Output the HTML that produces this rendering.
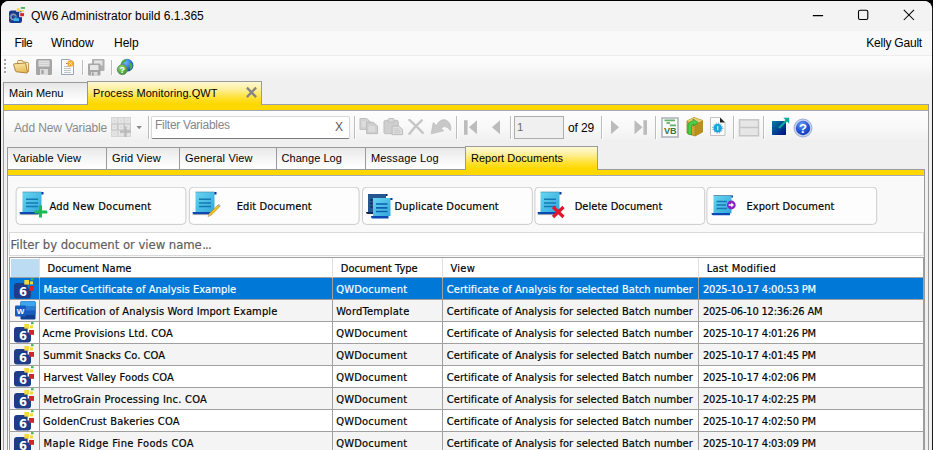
<!DOCTYPE html>
<html><head><meta charset="utf-8"><title>QW6 Administrator</title>
<style>
html,body{margin:0;padding:0;}
body{width:933px;height:450px;overflow:hidden;background:#000;position:relative;font-family:"Liberation Sans",sans-serif;font-size:12px;color:#000;}
.abs{position:absolute;}
#win{position:absolute;left:1px;top:1px;width:931px;height:460px;background:#f0f0f0;border-radius:8px 8px 0 0;overflow:hidden;}
#title{position:absolute;left:0;top:0;width:931px;height:30px;background:#f3f3f3;}
#menubar{position:absolute;left:0;top:30px;width:931px;height:24px;background:#f9f9f9;border-bottom:1px solid #eeeeee;}
.t12{font-size:12px;line-height:14px;white-space:nowrap;position:absolute;}
.t11{font-size:11px;line-height:13px;white-space:nowrap;position:absolute;}
.tah{-webkit-text-stroke:0.18px;font-family:"DejaVu Sans Condensed","DejaVu Sans","Liberation Sans",sans-serif;font-stretch:condensed;font-size:11px;line-height:13px;white-space:nowrap;position:absolute;}
.sep{position:absolute;width:1px;background:#bdbdbd;}
.tab{position:absolute;top:146px;height:23px;border:1px solid #9a9a9a;background:linear-gradient(#e8e8e8,#f4f4f4 45%,#fefefe 90%);box-sizing:border-box;}
.ts{letter-spacing:0.15px;}
.btn{position:absolute;top:186px;height:38px;width:171px;box-sizing:border-box;border:1px solid #d0d0d0;border-radius:4px;background:#fdfdfd;}
.row{position:absolute;left:9px;width:913px;height:21px;}
.cell{position:absolute;top:0;height:21px;}
.hl{position:absolute;left:9px;width:913px;height:1px;background:#a9a9a9;}
.vl{position:absolute;width:1px;background:#a9a9a9;}
</style></head><body>
<div id="win">
 <div id="title"></div>
 <div id="menubar"></div>
 <!-- title -->
 <svg class="abs" style="left:7px;top:5px" width="20" height="20" viewBox="0 0 20 20">
  <rect x="1" y="4.600" width="13" height="12.400" rx="2.200" fill="#17388f"/>
  <circle cx="5.300" cy="11" r="2.400" fill="none" stroke="#8f98a8" stroke-width="1.500"/>
  <circle cx="5.300" cy="11" r="3.500" fill="none" stroke="#8f98a8" stroke-width="0.900" stroke-dasharray="1.100 1.100" opacity="0.850"/>
  <rect x="6" y="12.200" width="5" height="2.900" fill="#39b3ea"/>
  <path d="M5 10.500Q7 9.200 8.500 11.500" stroke="#1c5fc0" stroke-width="1.200" fill="none"/>
  <rect x="8.600" y="2" width="3.400" height="3.500" fill="#f2dc38" stroke="#f3f3f3" stroke-width="0.500"/>
  <rect x="12.500" y="4" width="3.500" height="1.500" fill="#f2dc38"/>
  <rect x="11.700" y="6.700" width="4.800" height="4" fill="#d8252c" stroke="#f3f3f3" stroke-width="0.900"/>
  <rect x="12.800" y="1.100" width="4.200" height="1.700" fill="#35b44a"/>
 </svg>
 <div class="t12" style="left:30px;top:8px;">QW6 Administrator build 6.1.365</div>
 <svg class="abs" style="left:810px;top:8px" width="112" height="13" viewBox="0 0 112 13">
  <path d="M1.800 6.600H12.100" stroke="#000" stroke-width="1.050" fill="none"/>
  <rect x="47.500" y="1.200" width="9.300" height="9.300" rx="1.500" stroke="#000" stroke-width="1.100" fill="none"/>
  <path d="M92.800 0.800L103 11M103 0.800L92.800 11" stroke="#000" stroke-width="1.050" fill="none"/>
 </svg>
 <!-- menu -->
 <div class="t12" style="left:13.500px;top:35px;letter-spacing:-0.4px;">File</div>
 <div class="t12" style="left:50px;top:35px;">Window</div>
 <div class="t12" style="left:113px;top:35px;">Help</div>
 <div class="t12" style="right:10px;top:35px;letter-spacing:-0.2px;">Kelly Gault</div>
 <!-- toolbar1 -->
 <div class="abs" style="left:0;top:55px;width:931px;height:25px;background:linear-gradient(#fcfcfc 0,#fafafa 35%,#f3f3f3 75%,#f0f0f0 100%);"></div>
 
<svg class="abs" style="left:2px;top:57px" width="6" height="18" viewBox="0 0 6 18">
<g fill="#fff"><rect x="2" y="2" width="2" height="2"/><rect x="2" y="6" width="2" height="2"/><rect x="2" y="10" width="2" height="2"/><rect x="2" y="14" width="2" height="2"/></g>
<g fill="#a3a3a3"><rect x="1" y="1" width="2" height="2"/><rect x="1" y="5" width="2" height="2"/><rect x="1" y="9" width="2" height="2"/><rect x="1" y="13" width="2" height="2"/></g>
</svg>
<svg class="abs" style="left:12px;top:58px" width="17" height="16" viewBox="0 0 17 16">
<defs><linearGradient id="fo" x1="0" y1="0" x2="0.3" y2="1"><stop offset="0" stop-color="#fbe9ad"/><stop offset="1" stop-color="#e6bd5c"/></linearGradient></defs>
<path d="M4.500 2.500Q4.600 1.400 5.800 1.500L9 1.500Q10 1.600 10.500 3L14.800 3.500Q15.600 3.600 15.600 4.500L15.500 12.500L6 12Z" fill="#fcf3cb" stroke="#b48a3c" stroke-width="0.900" stroke-linejoin="round"/>
<path d="M0.600 5.600Q0.500 4.900 1.300 4.800L11.800 4Q12.600 4 12.800 4.800L14.500 13.200Q14.600 14.100 13.700 14L3.600 12.800Q2.800 12.700 2.500 12Z" fill="url(#fo)" stroke="#a87a30" stroke-width="0.900" stroke-linejoin="round"/>
</svg>
<svg class="abs" style="left:35px;top:58px" width="16" height="16" viewBox="0 0 16 16">
<rect x="0" y="0" width="16" height="16" rx="1.5" fill="#a6a6a6"/>
<rect x="2.5" y="1.5" width="11" height="6" fill="#e2e2e2"/>
<path d="M3 3.5H13M3 5.5H13" stroke="#cfcfcf" stroke-width="1"/>
<rect x="4" y="10" width="8" height="6" fill="#dcdcdc"/>
<rect x="5.5" y="11" width="2" height="4" fill="#9a9a9a"/>
</svg>
<svg class="abs" style="left:58px;top:57px" width="18" height="18" viewBox="0 0 18 18">
<path d="M2.5 1.5H10L14.5 4V16.5H2.5Z" fill="#fbfbfd" stroke="#9aa3b4" stroke-width="1"/>
<path d="M5 8.500H11M5 10.500H12M5 12.500H12M5 14.500H12" stroke="#bfc4cc" stroke-width="1"/><path d="M7 5.500H9" stroke="#777" stroke-width="1"/>
<circle cx="11.5" cy="5.5" r="3.8" fill="#fbc02d" opacity="0.4"/>
<circle cx="11.5" cy="5.5" r="2.9" fill="#f9a825"/>
<path d="M10.3 4.3L12.7 6.7M12.7 4.3L10.3 6.7" stroke="#fff" stroke-width="1"/>
</svg>
<div class="sep" style="left:81px;top:59px;height:15px;background:#bcbcbc"></div><div class="sep" style="left:82px;top:60px;height:15px;background:#fff"></div>
<svg class="abs" style="left:87px;top:58px" width="17" height="17" viewBox="0 0 17 17">
<rect x="4" y="0" width="12.5" height="12" rx="1" fill="#b0b0b0"/>
<rect x="6" y="1.5" width="8.5" height="5" fill="#e4e4e4"/>
<rect x="0" y="4.5" width="12.5" height="12" rx="1" fill="#a6a6a6"/>
<rect x="2" y="6" width="8.5" height="5" fill="#e6e6e6"/>
<rect x="3" y="13" width="6.5" height="3.5" fill="#dcdcdc"/>
<rect x="4" y="13.5" width="1.6" height="3" fill="#9a9a9a"/>
</svg>
<div class="sep" style="left:110px;top:59px;height:15px;background:#bcbcbc"></div><div class="sep" style="left:111px;top:60px;height:15px;background:#fff"></div>
<svg class="abs" style="left:115px;top:57px" width="18" height="18" viewBox="0 0 18 18">
<defs><radialGradient id="gl" cx="0.4" cy="0.3" r="0.8"><stop offset="0" stop-color="#6fb3f2"/><stop offset="0.6" stop-color="#2a6fd0"/><stop offset="1" stop-color="#143f8f"/></radialGradient>
<radialGradient id="gh" cx="0.4" cy="0.3" r="0.8"><stop offset="0" stop-color="#8fe06a"/><stop offset="1" stop-color="#2e8b22"/></radialGradient></defs>
<circle cx="11" cy="7.2" r="6.4" fill="url(#gl)"/>
<path d="M7 2.5Q9 1 11 1.5Q10 3.5 8 4.5Q7 6 5.5 5.5Q5.5 3.5 7 2.5Z" fill="#4caf3a"/>
<path d="M13 5Q15.5 4.5 16.5 7Q16.5 10 14.5 12Q13.5 10 14 8Q12.5 6.5 13 5Z" fill="#4caf3a"/>
<circle cx="6.3" cy="11.6" r="5" fill="url(#gh)" stroke="#6f7f6f" stroke-width="0.8"/>
<text x="6.3" y="15" text-anchor="middle" font-family="Liberation Sans, sans-serif" font-weight="bold" font-size="9" fill="#fff">?</text>
</svg>

 <!-- mdi panel -->
 <div class="abs" style="left:2px;top:103px;width:926px;height:360px;box-sizing:border-box;border:1px solid #9a9a9a;border-top-color:#9c9fb4;background:#f0f0f0;"></div>
 <div class="abs" style="left:3px;top:104px;width:924px;height:5px;background:#ffd800;"></div>
 <div class="abs" style="left:3px;top:109px;width:924px;height:1px;background:#a4a6b6;"></div>
 <!-- mdi tabs -->
 <div class="abs" style="left:2px;top:81px;width:85px;height:23px;box-sizing:border-box;border:1px solid #9a9a9a;border-right-color:#8e97ad;border-bottom-color:#9c9fb4;background:linear-gradient(#e6e6e6,#f4f4f4 45%,#ffffff 90%);"></div>
 <div class="t11" style="left:8px;top:86px;transform:scaleY(1.06);transform-origin:0 10px;">Main Menu</div>
 <div class="abs" style="left:86px;top:80px;width:175px;height:24px;box-sizing:border-box;border:1px solid #9a9a9a;border-left-color:#8e97ad;border-bottom:none;background:linear-gradient(#fdf8d4,#fdf0a0 30%,#ffe030 70%,#ffd800 95%);"></div>
 <div class="t11" style="left:92px;top:86px;letter-spacing:0.08px;transform:scaleY(1.06);transform-origin:0 10px;">Process Monitoring.QWT</div>
 <svg class="abs" style="left:244px;top:85px" width="13" height="13" viewBox="0 0 13 13"><path d="M1.900 1.600L11.100 11.100M11.100 1.600L1.900 11.100" stroke="#858585" stroke-width="2.300" fill="none"/></svg>
 <!-- toolbar2 -->
 <div class="abs" style="left:3px;top:110px;width:924px;height:29px;background:linear-gradient(#fdfdfd,#f9f9f9 50%,#f1f1f1);"></div>
 <div class="t12" style="left:13px;top:120px;color:#8a8a8a;letter-spacing:-0.13px;">Add New Variable</div>
 <div class="abs" style="left:150px;top:115px;width:199px;height:23px;background:#fff;border:1px solid #d8d8d8;border-bottom:1px solid #7c7c7c;border-radius:2px;box-sizing:border-box;"></div>
 <div class="t12" style="left:154px;top:117px;color:#85858f;letter-spacing:-0.27px;">Filter Variables</div>
 <div class="t12" style="left:334px;top:118.500px;color:#5a5a5a;">X</div>
 <div class="abs" style="left:513px;top:115px;width:50px;height:23px;background:#f0f0f0;border:1px solid #adadad;box-sizing:border-box;"></div>
 <div class="t12" style="left:516px;top:119px;color:#6d6d6d;font-size:11.500px;">1</div>
 <div class="t12" style="left:567px;top:120px;letter-spacing:-0.1px;">of 29</div>
 
<svg class="abs" style="left:110px;top:116px" width="20" height="20" viewBox="0 0 20 20">
<rect x="0" y="0" width="20" height="20" fill="#d6d6d6"/><rect x="0" y="6.500" width="20" height="7" fill="#c9c9c9"/>
<rect x="1.2" y="1.2" width="4.600" height="4.600" fill="#e7e7e7"/><rect x="2.6" y="2.6" width="1.800" height="1.800" fill="#d9d9d9"/><rect x="1.2" y="7.7" width="4.600" height="4.600" fill="#e7e7e7"/><rect x="2.6" y="9.1" width="1.800" height="1.800" fill="#d9d9d9"/><rect x="1.2" y="14.2" width="4.600" height="4.600" fill="#e7e7e7"/><rect x="2.6" y="15.6" width="1.800" height="1.800" fill="#d9d9d9"/><rect x="7.7" y="1.2" width="4.600" height="4.600" fill="#e7e7e7"/><rect x="9.1" y="2.6" width="1.800" height="1.800" fill="#d9d9d9"/><rect x="7.7" y="7.7" width="4.600" height="4.600" fill="#e7e7e7"/><rect x="9.1" y="9.1" width="1.800" height="1.800" fill="#d9d9d9"/><rect x="7.7" y="14.2" width="4.600" height="4.600" fill="#e7e7e7"/><rect x="9.1" y="15.6" width="1.800" height="1.800" fill="#d9d9d9"/><rect x="14.2" y="1.2" width="4.600" height="4.600" fill="#e7e7e7"/><rect x="15.6" y="2.6" width="1.800" height="1.800" fill="#d9d9d9"/><rect x="14.2" y="7.7" width="4.600" height="4.600" fill="#e7e7e7"/><rect x="15.6" y="9.1" width="1.800" height="1.800" fill="#d9d9d9"/><rect x="14.2" y="14.2" width="4.600" height="4.600" fill="#e7e7e7"/><rect x="15.6" y="15.6" width="1.800" height="1.800" fill="#d9d9d9"/>
<path d="M14.500 9.500V20M9 14.600H20" stroke="#bababa" stroke-width="2.200"/>
</svg>
<svg class="abs" style="left:135.400px;top:125px" width="7" height="4" viewBox="0 0 7 4"><path d="M0.500 0H5.900L3.200 3.200Z" fill="#8a8a8a"/></svg>
<div class="sep" style="left:147px;top:115px;height:23px;background:#bdbdbd"></div><div class="sep" style="left:148px;top:116px;height:23px;background:#fff"></div><div class="sep" style="left:353px;top:115px;height:23px;background:#bdbdbd"></div><div class="sep" style="left:354px;top:116px;height:23px;background:#fff"></div>
<svg class="abs" style="left:357.500px;top:117.300px" width="20" height="17.100" viewBox="0 0 21 18">
<path d="M1 0.5H8L12 4V12H1Z" fill="#d2d2d2" stroke="#bdbdbd" stroke-width="1"/>
<path d="M3 4.5H9M3 6.5H9M3 8.5H7" stroke="#e6e6e6" stroke-width="1"/>
<path d="M8 4.5H15L19.5 8.5V16.5H8Z" fill="#cfcfcf" stroke="#b9b9b9" stroke-width="1"/>
<path d="M10 9.5H17M10 11.5H17M10 13.5H17" stroke="#e8e8e8" stroke-width="1"/>
</svg>
<svg class="abs" style="left:381.500px;top:117px" width="21" height="18.100" viewBox="0 0 22 19">
<rect x="1" y="2.5" width="15" height="14" rx="1.5" fill="#cfcfcf" stroke="#bdbdbd"/>
<rect x="5.5" y="0.5" width="6" height="4" rx="1" fill="#d9d9d9" stroke="#bdbdbd"/>
<path d="M9.500 8.500H16.500L20.500 12V17.500H9.500Z" fill="#dedede" stroke="#b9b9b9"/>
<path d="M11.500 11.500H17M11.500 13.500H18.500M11.500 15.500H18.500" stroke="#c6c6c6" stroke-width="1"/>
</svg>
<svg class="abs" style="left:407.300px;top:118px" width="16.200" height="16.200" viewBox="0 0 17 17">
<path d="M1.500 1Q7 6 15.500 14.500M14.500 1.500Q8 7 1.500 15.500" stroke="#c6c6c6" stroke-width="2.6" fill="none" stroke-linecap="round"/>
</svg>
<svg class="abs" style="left:429px;top:117px" width="22" height="17" viewBox="0 0 22 17">
<path d="M1.200 15.800L3.200 4.500L6.500 7.500Q9 2 14 1.600Q19.500 2.500 20.800 8.500Q21 11 20.300 12.800Q18.500 8.800 14.500 8.600Q12.500 8.800 11.300 10.600L13.800 12.800Z" fill="#c8c8c8" stroke="#bdbdbd" stroke-width="0.700" stroke-linejoin="round"/>
</svg>
<div class="sep" style="left:455px;top:115px;height:23px;background:#bdbdbd"></div><div class="sep" style="left:456px;top:116px;height:23px;background:#fff"></div>
<svg class="abs" style="left:462px;top:118px" width="16" height="17" viewBox="0 0 16 17">
<rect x="1" y="1.200" width="3.600" height="14.600" fill="#bcbcbc"/><path d="M6 8.200L14 1.200V15.200Z" fill="#bcbcbc"/></svg>
<svg class="abs" style="left:490px;top:118px" width="10" height="17" viewBox="0 0 10 17"><path d="M1 8.200L9 1.200V15.200Z" fill="#bcbcbc"/></svg>
<div class="sep" style="left:509px;top:115px;height:23px;background:#bdbdbd"></div><div class="sep" style="left:510px;top:116px;height:23px;background:#fff"></div><div class="sep" style="left:600px;top:115px;height:23px;background:#bdbdbd"></div><div class="sep" style="left:601px;top:116px;height:23px;background:#fff"></div>
<svg class="abs" style="left:609px;top:118px" width="10" height="17" viewBox="0 0 10 17"><path d="M9 8.200L1 1.200V15.200Z" fill="#bcbcbc"/></svg>
<svg class="abs" style="left:631.500px;top:118px" width="16" height="17" viewBox="0 0 16 17">
<path d="M9.500 8.200L1.500 1.200V15.200Z" fill="#bcbcbc"/><rect x="10.400" y="1.200" width="3.600" height="14.600" fill="#bcbcbc"/></svg>
<div class="sep" style="left:654px;top:115px;height:23px;background:#bdbdbd"></div><div class="sep" style="left:655px;top:116px;height:23px;background:#fff"></div>
<svg class="abs" style="left:660px;top:116px" width="18" height="21" viewBox="0 0 18 21">
<rect x="1" y="1" width="16" height="19" fill="#fdfdfd" stroke="#aeb3bf" stroke-width="1.600"/>
<path d="M3.500 3.400H14" stroke="#62b062" stroke-width="1.700"/><path d="M5.500 6H9" stroke="#4c9a4c" stroke-width="1.300"/><path d="M8.800 8.400H15" stroke="#62b062" stroke-width="1.700"/>
<text x="9.300" y="17.300" text-anchor="middle" font-family="Liberation Sans, sans-serif" font-weight="bold" font-size="9.500" fill="#35763a" textLength="12.600" lengthAdjust="spacingAndGlyphs">VB</text>
</svg>
<svg class="abs" style="left:684px;top:115.200px" width="19" height="21" viewBox="0 0 19 21">
<path d="M2 5L9 1.500L17.500 4.500V16L10 20L2 17Z" fill="#cfa730" stroke="#9c7a14" stroke-width="0.800"/>
<path d="M10 8L17.500 4.500V16L10 20Z" fill="#b98f1e"/>
<path d="M2 5L9 1.500L17.500 4.500L10 8Z" fill="#e9cd6c"/>
<path d="M10 8V20" stroke="#a98418" stroke-width="0.600"/>
<path d="M3 18V10Q3 5.500 8 5V3L13 6.500L8.500 10V8Q6.500 8.500 6.500 11V19Z" fill="#46d046" stroke="#2b9b2b" stroke-width="0.700"/>
</svg>
<svg class="abs" style="left:708.200px;top:115.200px" width="18" height="21" viewBox="0 0 18 21">
<path d="M1.500 1.500H11L16 6.500V19.500H1.500Z" fill="#fdfdfd" stroke="#c2c2c2" stroke-width="1"/>
<path d="M11 1.500L16 6.500H11Z" fill="#222"/>
<circle cx="8.700" cy="12.100" r="4.300" fill="#1ba4de"/>
<circle cx="8.700" cy="12.100" r="5" fill="none" stroke="#2b6f92" stroke-width="0.900" stroke-dasharray="0.900 1.720"/>
<rect x="8.100" y="10" width="1.200" height="4.200" fill="#cfeefb"/>
</svg>
<div class="sep" style="left:732px;top:115px;height:23px;background:#bdbdbd"></div><div class="sep" style="left:733px;top:116px;height:23px;background:#fff"></div>
<svg class="abs" style="left:737px;top:117px" width="22" height="19" viewBox="0 0 22 19">
<rect x="1.500" y="1.800" width="19" height="16" fill="#e6e6e6" stroke="#c6c6c6" stroke-width="1.500"/>
<path d="M1.500 9.600H20.500" stroke="#c6c6c6" stroke-width="1.500"/>
</svg>
<div class="sep" style="left:762px;top:115px;height:23px;background:#bdbdbd"></div><div class="sep" style="left:763px;top:116px;height:23px;background:#fff"></div>
<svg class="abs" style="left:770px;top:115px" width="20" height="20" viewBox="0 0 20 20">
<defs><linearGradient id="sq" x1="0" y1="0" x2="1" y2="1"><stop offset="0" stop-color="#007fa3"/><stop offset="1" stop-color="#000a80"/></linearGradient></defs>
<rect x="1" y="5" width="14" height="14" rx="0.700" fill="url(#sq)"/>
<path d="M8 12L16 4" stroke="#10a99b" stroke-width="2.200"/>
<path d="M12.300 1.800H18.200V7.700Z" fill="#10a99b"/>
</svg>
<svg class="abs" style="left:792px;top:117px" width="20" height="20" viewBox="0 0 20 20">
<defs><radialGradient id="hb" cx="0.400" cy="0.250" r="0.900"><stop offset="0" stop-color="#6d9bf5"/><stop offset="0.500" stop-color="#2358d6"/><stop offset="1" stop-color="#0f2fa8"/></radialGradient></defs>
<circle cx="10" cy="10" r="9" fill="#c9d3ee" stroke="#8e9fd4" stroke-width="0.800"/>
<circle cx="10" cy="10" r="7.200" fill="url(#hb)"/>
<text x="10" y="14.600" text-anchor="middle" font-family="Liberation Sans, sans-serif" font-weight="bold" font-size="13" fill="#fff">?</text>
</svg>

 <!-- tab page -->
 <div class="abs" style="left:6px;top:168px;width:918px;height:300px;box-sizing:border-box;border:1px solid #9a9a9a;background:#f9f9f9;"></div>
 <div class="abs" style="left:7px;top:169px;width:916px;height:5px;background:#ffd800;"></div>
 <div class="abs" style="left:7px;top:174px;width:916px;height:1px;background:#a6a8b4;"></div><div class="abs" style="left:7px;top:175px;width:916px;height:1px;background:#ffffff;"></div>
 <!-- inner tabs -->
 <div class="tab" style="left:6px;width:100px;"></div><div class="t11 ts" style="left:12px;top:151px;">Variable View</div>
 <div class="tab" style="left:105px;width:74px;"></div><div class="t11 ts" style="left:111px;top:151px;">Grid View</div>
 <div class="tab" style="left:178px;width:98px;"></div><div class="t11 ts" style="left:184px;top:151px;">General View</div>
 <div class="tab" style="left:275px;width:90px;"></div><div class="t11" style="left:280.500px;top:151px;letter-spacing:0.05px;">Change Log</div>
 <div class="tab" style="left:364px;width:101px;"></div><div class="t11 ts" style="left:370px;top:151px;">Message Log</div>
 <div class="abs" style="left:464px;top:145px;width:133px;height:24px;box-sizing:border-box;border:1px solid #9a9a9a;border-bottom:none;background:linear-gradient(#fdf8d4,#fdf0a0 30%,#ffe030 70%,#ffd800 95%);"></div><div class="t11" style="left:470px;top:151px;letter-spacing:0.02px;">Report Documents</div>
 <!-- buttons -->
 <svg class="abs" style="left:0;top:186px" width="931" height="40" viewBox="0 0 931 40"><rect x="15.1" y="0.200" width="169.800" height="37.200" rx="4" fill="#fdfdfd" stroke="#cbcbcb" stroke-width="1"/><rect x="188.3" y="0.200" width="169.800" height="37.200" rx="4" fill="#fdfdfd" stroke="#cbcbcb" stroke-width="1"/><rect x="361.5" y="0.200" width="169.800" height="37.200" rx="4" fill="#fdfdfd" stroke="#cbcbcb" stroke-width="1"/><rect x="533.9" y="0.200" width="169.800" height="37.200" rx="4" fill="#fdfdfd" stroke="#cbcbcb" stroke-width="1"/><rect x="705.9" y="0.200" width="169.800" height="37.200" rx="4" fill="#fdfdfd" stroke="#cbcbcb" stroke-width="1"/></svg>
 <div class="tah" style="left:48.40px;top:199px;letter-spacing:0.233px;color:#000;">Add New Document</div><div class="tah" style="left:235.70px;top:199px;letter-spacing:0.117px;color:#000;">Edit Document</div><div class="tah" style="left:393.60px;top:199px;letter-spacing:0.148px;color:#000;">Duplicate Document</div><div class="tah" style="left:573.70px;top:199px;letter-spacing:0.046px;color:#000;">Delete Document</div><div class="tah" style="left:745.50px;top:199px;letter-spacing:0.077px;color:#000;">Export Document</div>
 <svg class="abs" style="left:17.3px;top:188px" width="34" height="32" viewBox="0 0 34 32">
<defs><linearGradient id="sca" x1="0" y1="0" x2="1" y2="1"><stop offset="0" stop-color="#66d6f1"/><stop offset="1" stop-color="#31a6dc"/></linearGradient></defs>

<path d="M23 3H25.500V5.500H23Z" fill="#0d3aa0"/>
<path d="M4.500 3H23.500V23H4.500Z" fill="url(#sca)"/>
<path d="M4.500 3H23.500" stroke="#4a7f9e" stroke-width="0.600"/>
<path d="M8 10.300H20M8 14H20M8 17.600H20" stroke="#157ab2" stroke-width="1.500"/>
<path d="M1.500 23H21V25.300H3Q1.500 25.300 1.500 23Z" fill="#0c47b4"/>
<path d="M1.500 25.600H20" stroke="#6b6b6b" stroke-width="0.500"/>
<path d="M20 23.300H30" stroke="#7d7d7d" stroke-width="0.700"/><path d="M22.500 16.500V28.500M16.500 23H29" stroke="#1db954" stroke-width="3"/>
</svg><svg class="abs" style="left:190.3px;top:188px" width="34" height="32" viewBox="0 0 34 32">
<defs><linearGradient id="scb" x1="0" y1="0" x2="1" y2="1"><stop offset="0" stop-color="#66d6f1"/><stop offset="1" stop-color="#31a6dc"/></linearGradient></defs>

<path d="M23 3H25.500V5.500H23Z" fill="#0d3aa0"/>
<path d="M4.500 3H23.500V23H4.500Z" fill="url(#scb)"/>
<path d="M4.500 3H23.500" stroke="#4a7f9e" stroke-width="0.600"/>
<path d="M8 10.300H20M8 14H20M8 17.600H20" stroke="#157ab2" stroke-width="1.500"/>
<path d="M1.500 23H21V25.300H3Q1.500 25.300 1.500 23Z" fill="#0c47b4"/>
<path d="M1.500 25.600H20" stroke="#6b6b6b" stroke-width="0.500"/>
<path d="M17 27.500L18.300 24.500L26.800 16.200L28.500 17.900L20 26.300Z" fill="#f4c21b" stroke="#9c7a12" stroke-width="0.500"/><path d="M26.800 16.200L27.800 15.200L29.500 16.900L28.500 17.900Z" fill="#bdbdbd" stroke="#888" stroke-width="0.400"/><path d="M17 27.500L18.300 24.500L20 26.300Z" fill="#d9b9a0"/>
</svg><svg class="abs" style="left:535.3px;top:188px" width="34" height="32" viewBox="0 0 34 32">
<defs><linearGradient id="scd" x1="0" y1="0" x2="1" y2="1"><stop offset="0" stop-color="#66d6f1"/><stop offset="1" stop-color="#31a6dc"/></linearGradient></defs>

<path d="M23 3H25.500V5.500H23Z" fill="#0d3aa0"/>
<path d="M4.500 3H23.500V23H4.500Z" fill="url(#scd)"/>
<path d="M4.500 3H23.500" stroke="#4a7f9e" stroke-width="0.600"/>
<path d="M8 10.300H20M8 14H20M8 17.600H20" stroke="#157ab2" stroke-width="1.500"/>
<path d="M1.500 23H21V25.300H3Q1.500 25.300 1.500 23Z" fill="#0c47b4"/>
<path d="M1.500 25.600H20" stroke="#6b6b6b" stroke-width="0.500"/>
<path d="M17 18L27.500 28M27.500 18L17 28" stroke="#e0182d" stroke-width="3.200"/>
</svg><svg class="abs" style="left:364.200px;top:190.200px" width="30" height="30" viewBox="0 0 30 30">
<defs><linearGradient id="scc" x1="0" y1="0" x2="1" y2="1"><stop offset="0" stop-color="#66d6f1"/><stop offset="1" stop-color="#31a6dc"/></linearGradient></defs>
<path d="M20.500 3H22.500V5H20.500Z" fill="#10244f"/>
<path d="M3 3H21V21H3Z" fill="#24578f"/>
<path d="M1 21H9V23H2.500Q1 23 1 21Z" fill="#14285a"/>
<path d="M5.500 9H7.500M5.500 12.500H7.500M5.500 16H7.500" stroke="#10244f" stroke-width="1.300"/>
<path d="M25 7H27.500V9H25Z" fill="#0d3aa0"/>
<path d="M8 7H25.500V25H8Z" fill="url(#scc)"/>
<path d="M11 13H22.500M11 16.800H22.500M11 20.500H22.500" stroke="#0d5fae" stroke-width="1.700"/>
<path d="M6 25H23.500V27.500H7.500Q6 27.500 6 25Z" fill="#0c47b4"/>
</svg><svg class="abs" style="left:709px;top:192.200px" width="28" height="26" viewBox="0 0 28 26">
<defs><linearGradient id="sce" x1="0" y1="0" x2="1" y2="1"><stop offset="0" stop-color="#66d6f1"/><stop offset="1" stop-color="#31a6dc"/></linearGradient></defs>
<path d="M20.500 2.500H23V4.500H20.500Z" fill="#0d3aa0"/>
<path d="M3.500 2.500H21.500V20.300H3.500Z" fill="url(#sce)"/>
<path d="M3.500 2.500H21.500" stroke="#4a6f8e" stroke-width="0.700"/>
<path d="M6.500 8.500H17M6.500 12H16M6.500 15.500H17" stroke="#157ab2" stroke-width="1.500"/>
<path d="M1.500 20H20V22.300H3Q1.500 22.300 1.500 20Z" fill="#0c47b4"/>
<circle cx="21.300" cy="12" r="4.400" fill="#8a1fc4"/>
<path d="M18.700 12H22" stroke="#fff" stroke-width="1.500"/><path d="M21.300 9.600L24 12L21.300 14.400Z" fill="#fff"/>
</svg>
 <!-- filter box -->
 <div class="abs" style="left:8px;top:231px;width:915px;height:24px;background:#fff;border:1px solid #d9d9d9;box-sizing:border-box;"></div>
 <div class="tah" style="left:9.60px;top:236px;letter-spacing:-0.055px;color:#5e5e5e;font-size:13px;line-height:15px;">Filter by document or view name</div><div class="tah" style="left:201.20px;top:236px;letter-spacing:-0.813px;color:#5e5e5e;font-size:13px;line-height:15px;">...</div>
 <!-- grid -->
 <div class="abs" style="left:8px;top:256px;width:915px;height:200px;background:#fff;"></div>
<div class="abs" style="left:8px;top:256px;width:915px;height:1px;background:#a0a0a0;"></div>
<div class="abs" style="left:8px;top:256px;width:1px;height:200px;background:#a0a0a0;"></div>
<div class="abs" style="left:922px;top:256px;width:1px;height:200px;background:#a0a0a0;"></div>
<div class="abs" style="left:10px;top:258px;width:28px;height:18px;background:#bcdcf4;"></div>
<div class="abs" style="left:9px;top:276px;width:913px;height:1px;background:#a0a0a0;"></div>
<div class="abs" style="left:38px;top:257px;width:1px;height:20px;background:#e0e0e0;"></div>
<div class="abs" style="left:331px;top:257px;width:1px;height:20px;background:#e0e0e0;"></div>
<div class="abs" style="left:441px;top:257px;width:1px;height:20px;background:#e0e0e0;"></div>
<div class="abs" style="left:697px;top:257px;width:1px;height:20px;background:#e0e0e0;"></div>
<div class="tah" style="left:46.50px;top:261px;letter-spacing:0.023px;color:#000;">Document Name</div>
<div class="tah" style="left:339.80px;top:261px;letter-spacing:-0.015px;color:#000;">Document Type</div>
<div class="tah" style="left:449.40px;top:261px;letter-spacing:0.344px;color:#000;">View</div>
<div class="tah" style="left:705.80px;top:261px;letter-spacing:0.241px;color:#000;">Last Modified</div>
<div class="abs" style="left:9px;top:277px;width:913px;height:21px;background:#0078d7;"></div>
<div class="abs" style="left:9px;top:298px;width:913px;height:1px;background:#a0a0a0;"></div>
<svg class="abs" style="left:12px;top:277px" width="22" height="21" viewBox="0 0 22 21">
<path d="M4 5H14.600V10.500H18V17.500Q18 20.500 15 20.500H4Q1 20.500 1 17.500V8Q1 5 4 5Z" fill="#1f3c88"/>
<rect x="11.3" y="2" width="4.7" height="4.6" fill="#f3d93a"/>
<rect x="17" y="3.4" width="3" height="3" fill="#f3d93a"/>
<rect x="16" y="8" width="5" height="4.8" fill="#d3232b"/>
<rect x="18" y="0.2" width="2.6" height="2" fill="#3cb54a"/>
<text x="10.100" y="17.900" text-anchor="middle" font-family="DejaVu Sans, Liberation Sans, sans-serif" font-weight="bold" font-size="11.500" fill="#fff">6</text>
</svg>
<div class="tah" style="left:42.60px;top:282px;letter-spacing:0.040px;color:#fff;">Master Certificate of Analysis Example</div>
<div class="tah" style="left:335.20px;top:282px;letter-spacing:0.226px;color:#fff;">QWDocument</div>
<div class="tah" style="left:445.80px;top:282px;letter-spacing:0.063px;color:#fff;">Certificate of Analysis for selected Batch number</div>
<div class="tah" style="left:701.90px;top:282px;letter-spacing:-0.160px;color:#fff;">2025-10-17 4:00:53 PM</div>
<div class="abs" style="left:9px;top:299px;width:913px;height:21px;background:#f4f4f4;"></div>
<div class="abs" style="left:9px;top:320px;width:913px;height:1px;background:#a0a0a0;"></div>
<svg class="abs" style="left:12.6px;top:300.3px" width="22" height="20" viewBox="0 0 22 20">
<rect x="6.5" y="0.5" width="15" height="18" rx="1.2" fill="#103f91"/>
<rect x="6.5" y="0.5" width="15" height="13.5" rx="1.2" fill="#185abd"/>
<rect x="6.5" y="0.5" width="15" height="9" rx="1.2" fill="#2b7cd3"/>
<rect x="6.5" y="0.5" width="15" height="4.5" rx="1.2" fill="#41a5ee"/>
<rect x="1" y="4.5" width="11" height="11" rx="1" fill="#185abd"/>
<text x="6.5" y="13.2" text-anchor="middle" font-family="Liberation Sans, sans-serif" font-weight="bold" font-size="8" fill="#fff">W</text>
</svg>
<div class="tah" style="left:42.90px;top:304px;letter-spacing:0.133px;color:#000;">Certification of Analysis Word Import Example</div>
<div class="tah" style="left:335.20px;top:304px;letter-spacing:0.252px;color:#000;">WordTemplate</div>
<div class="tah" style="left:445.80px;top:304px;letter-spacing:0.063px;color:#000;">Certificate of Analysis for selected Batch number</div>
<div class="tah" style="left:701.90px;top:304px;letter-spacing:-0.185px;color:#000;">2025-06-10 12:36:26 AM</div>
<div class="abs" style="left:9px;top:321px;width:913px;height:21px;background:#ffffff;"></div>
<div class="abs" style="left:9px;top:342px;width:913px;height:1px;background:#a0a0a0;"></div>
<svg class="abs" style="left:12px;top:321px" width="22" height="21" viewBox="0 0 22 21">
<path d="M4 5H14.600V10.500H18V17.500Q18 20.500 15 20.500H4Q1 20.500 1 17.500V8Q1 5 4 5Z" fill="#1f3c88"/>
<rect x="11.3" y="2" width="4.7" height="4.6" fill="#f3d93a"/>
<rect x="17" y="3.4" width="3" height="3" fill="#f3d93a"/>
<rect x="16" y="8" width="5" height="4.8" fill="#d3232b"/>
<rect x="18" y="0.2" width="2.6" height="2" fill="#3cb54a"/>
<text x="10.100" y="17.900" text-anchor="middle" font-family="DejaVu Sans, Liberation Sans, sans-serif" font-weight="bold" font-size="11.500" fill="#fff">6</text>
</svg>
<div class="tah" style="left:41.60px;top:326px;letter-spacing:0.142px;color:#000;">Acme Provisions Ltd. COA</div>
<div class="tah" style="left:335.20px;top:326px;letter-spacing:0.226px;color:#000;">QWDocument</div>
<div class="tah" style="left:445.80px;top:326px;letter-spacing:0.063px;color:#000;">Certificate of Analysis for selected Batch number</div>
<div class="tah" style="left:701.90px;top:326px;letter-spacing:-0.160px;color:#000;">2025-10-17 4:01:26 PM</div>
<div class="abs" style="left:9px;top:343px;width:913px;height:21px;background:#f4f4f4;"></div>
<div class="abs" style="left:9px;top:364px;width:913px;height:1px;background:#a0a0a0;"></div>
<svg class="abs" style="left:12px;top:343px" width="22" height="21" viewBox="0 0 22 21">
<path d="M4 5H14.600V10.500H18V17.500Q18 20.500 15 20.500H4Q1 20.500 1 17.500V8Q1 5 4 5Z" fill="#1f3c88"/>
<rect x="11.3" y="2" width="4.7" height="4.6" fill="#f3d93a"/>
<rect x="17" y="3.4" width="3" height="3" fill="#f3d93a"/>
<rect x="16" y="8" width="5" height="4.8" fill="#d3232b"/>
<rect x="18" y="0.2" width="2.6" height="2" fill="#3cb54a"/>
<text x="10.100" y="17.900" text-anchor="middle" font-family="DejaVu Sans, Liberation Sans, sans-serif" font-weight="bold" font-size="11.500" fill="#fff">6</text>
</svg>
<div class="tah" style="left:42.30px;top:348px;letter-spacing:0.087px;color:#000;">Summit Snacks Co. COA</div>
<div class="tah" style="left:335.20px;top:348px;letter-spacing:0.226px;color:#000;">QWDocument</div>
<div class="tah" style="left:445.80px;top:348px;letter-spacing:0.063px;color:#000;">Certificate of Analysis for selected Batch number</div>
<div class="tah" style="left:701.90px;top:348px;letter-spacing:-0.160px;color:#000;">2025-10-17 4:01:45 PM</div>
<div class="abs" style="left:9px;top:365px;width:913px;height:21px;background:#ffffff;"></div>
<div class="abs" style="left:9px;top:386px;width:913px;height:1px;background:#a0a0a0;"></div>
<svg class="abs" style="left:12px;top:365px" width="22" height="21" viewBox="0 0 22 21">
<path d="M4 5H14.600V10.500H18V17.500Q18 20.500 15 20.500H4Q1 20.500 1 17.500V8Q1 5 4 5Z" fill="#1f3c88"/>
<rect x="11.3" y="2" width="4.7" height="4.6" fill="#f3d93a"/>
<rect x="17" y="3.4" width="3" height="3" fill="#f3d93a"/>
<rect x="16" y="8" width="5" height="4.8" fill="#d3232b"/>
<rect x="18" y="0.2" width="2.6" height="2" fill="#3cb54a"/>
<text x="10.100" y="17.900" text-anchor="middle" font-family="DejaVu Sans, Liberation Sans, sans-serif" font-weight="bold" font-size="11.500" fill="#fff">6</text>
</svg>
<div class="tah" style="left:42.60px;top:370px;letter-spacing:0.115px;color:#000;">Harvest Valley Foods COA</div>
<div class="tah" style="left:335.20px;top:370px;letter-spacing:0.226px;color:#000;">QWDocument</div>
<div class="tah" style="left:445.80px;top:370px;letter-spacing:0.063px;color:#000;">Certificate of Analysis for selected Batch number</div>
<div class="tah" style="left:701.90px;top:370px;letter-spacing:-0.160px;color:#000;">2025-10-17 4:02:06 PM</div>
<div class="abs" style="left:9px;top:387px;width:913px;height:21px;background:#f4f4f4;"></div>
<div class="abs" style="left:9px;top:408px;width:913px;height:1px;background:#a0a0a0;"></div>
<svg class="abs" style="left:12px;top:387px" width="22" height="21" viewBox="0 0 22 21">
<path d="M4 5H14.600V10.500H18V17.500Q18 20.500 15 20.500H4Q1 20.500 1 17.500V8Q1 5 4 5Z" fill="#1f3c88"/>
<rect x="11.3" y="2" width="4.7" height="4.6" fill="#f3d93a"/>
<rect x="17" y="3.4" width="3" height="3" fill="#f3d93a"/>
<rect x="16" y="8" width="5" height="4.8" fill="#d3232b"/>
<rect x="18" y="0.2" width="2.6" height="2" fill="#3cb54a"/>
<text x="10.100" y="17.900" text-anchor="middle" font-family="DejaVu Sans, Liberation Sans, sans-serif" font-weight="bold" font-size="11.500" fill="#fff">6</text>
</svg>
<div class="tah" style="left:42.60px;top:392px;letter-spacing:0.230px;color:#000;">MetroGrain Processing Inc. COA</div>
<div class="tah" style="left:335.20px;top:392px;letter-spacing:0.226px;color:#000;">QWDocument</div>
<div class="tah" style="left:445.80px;top:392px;letter-spacing:0.063px;color:#000;">Certificate of Analysis for selected Batch number</div>
<div class="tah" style="left:701.90px;top:392px;letter-spacing:-0.160px;color:#000;">2025-10-17 4:02:25 PM</div>
<div class="abs" style="left:9px;top:409px;width:913px;height:21px;background:#ffffff;"></div>
<div class="abs" style="left:9px;top:430px;width:913px;height:1px;background:#a0a0a0;"></div>
<svg class="abs" style="left:12px;top:409px" width="22" height="21" viewBox="0 0 22 21">
<path d="M4 5H14.600V10.500H18V17.500Q18 20.500 15 20.500H4Q1 20.500 1 17.500V8Q1 5 4 5Z" fill="#1f3c88"/>
<rect x="11.3" y="2" width="4.7" height="4.6" fill="#f3d93a"/>
<rect x="17" y="3.4" width="3" height="3" fill="#f3d93a"/>
<rect x="16" y="8" width="5" height="4.8" fill="#d3232b"/>
<rect x="18" y="0.2" width="2.6" height="2" fill="#3cb54a"/>
<text x="10.100" y="17.900" text-anchor="middle" font-family="DejaVu Sans, Liberation Sans, sans-serif" font-weight="bold" font-size="11.500" fill="#fff">6</text>
</svg>
<div class="tah" style="left:42.10px;top:414px;letter-spacing:0.220px;color:#000;">GoldenCrust Bakeries COA</div>
<div class="tah" style="left:335.20px;top:414px;letter-spacing:0.226px;color:#000;">QWDocument</div>
<div class="tah" style="left:445.80px;top:414px;letter-spacing:0.063px;color:#000;">Certificate of Analysis for selected Batch number</div>
<div class="tah" style="left:701.90px;top:414px;letter-spacing:-0.160px;color:#000;">2025-10-17 4:02:50 PM</div>
<div class="abs" style="left:9px;top:431px;width:913px;height:21px;background:#f4f4f4;"></div>
<div class="abs" style="left:9px;top:452px;width:913px;height:1px;background:#a0a0a0;"></div>
<svg class="abs" style="left:12px;top:431px" width="22" height="21" viewBox="0 0 22 21">
<path d="M4 5H14.600V10.500H18V17.500Q18 20.500 15 20.500H4Q1 20.500 1 17.500V8Q1 5 4 5Z" fill="#1f3c88"/>
<rect x="11.3" y="2" width="4.7" height="4.6" fill="#f3d93a"/>
<rect x="17" y="3.4" width="3" height="3" fill="#f3d93a"/>
<rect x="16" y="8" width="5" height="4.8" fill="#d3232b"/>
<rect x="18" y="0.2" width="2.6" height="2" fill="#3cb54a"/>
<text x="10.100" y="17.900" text-anchor="middle" font-family="DejaVu Sans, Liberation Sans, sans-serif" font-weight="bold" font-size="11.500" fill="#fff">6</text>
</svg>
<div class="tah" style="left:42.60px;top:436px;letter-spacing:0.370px;color:#000;">Maple Ridge Fine Foods COA</div>
<div class="tah" style="left:335.20px;top:436px;letter-spacing:0.226px;color:#000;">QWDocument</div>
<div class="tah" style="left:445.80px;top:436px;letter-spacing:0.063px;color:#000;">Certificate of Analysis for selected Batch number</div>
<div class="tah" style="left:701.90px;top:436px;letter-spacing:-0.160px;color:#000;">2025-10-17 4:03:09 PM</div>
<div class="abs" style="left:38px;top:277px;width:1px;height:180px;background:#a0a0a0;"></div>
<div class="abs" style="left:331px;top:277px;width:1px;height:180px;background:#a0a0a0;"></div>
<div class="abs" style="left:441px;top:277px;width:1px;height:180px;background:#a0a0a0;"></div>
<div class="abs" style="left:697px;top:277px;width:1px;height:180px;background:#a0a0a0;"></div>
</div>
<div class="abs" style="left:932px;top:8px;width:1px;height:442px;background:#1a1a1a;"></div>
</body></html>
